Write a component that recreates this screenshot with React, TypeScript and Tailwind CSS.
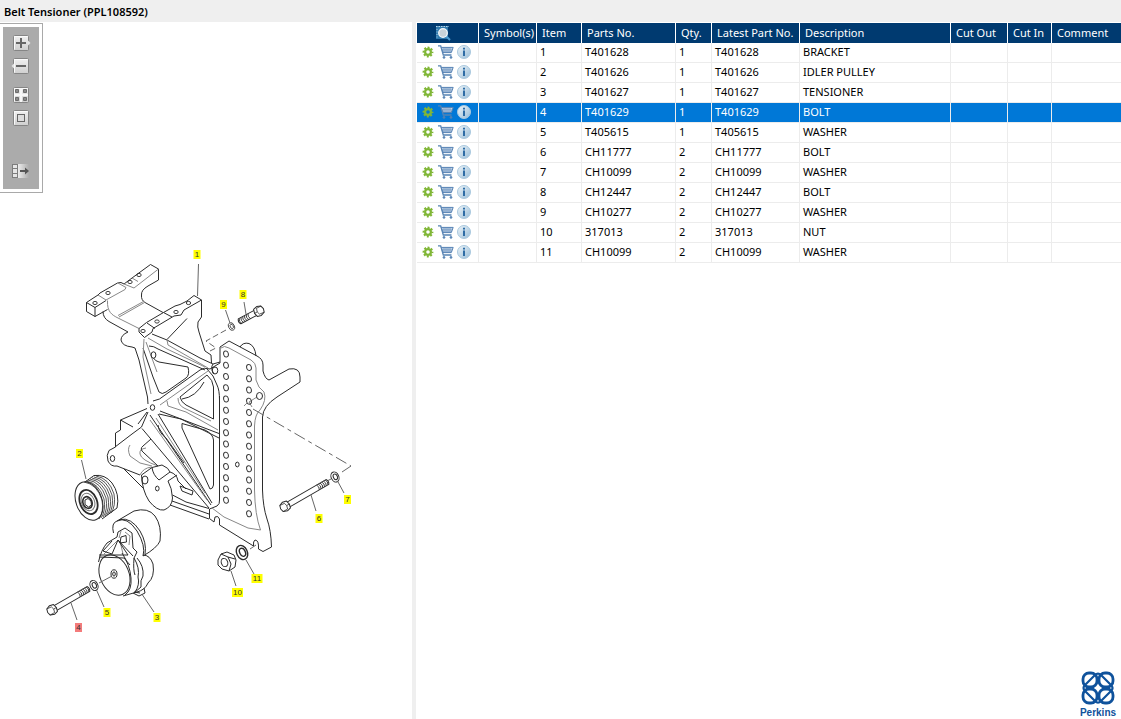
import React, { useState } from 'react'

const parts = [
  { item: 1, partNo: 'T401628', qty: 1, description: 'BRACKET' },
  { item: 2, partNo: 'T401626', qty: 1, description: 'IDLER PULLEY' },
  { item: 3, partNo: 'T401627', qty: 1, description: 'TENSIONER' },
  { item: 4, partNo: 'T401629', qty: 1, description: 'BOLT' },
  { item: 5, partNo: 'T405615', qty: 1, description: 'WASHER' },
  { item: 6, partNo: 'CH11777', qty: 2, description: 'BOLT' },
  { item: 7, partNo: 'CH10099', qty: 2, description: 'WASHER' },
  { item: 8, partNo: 'CH12447', qty: 2, description: 'BOLT' },
  { item: 9, partNo: 'CH10277', qty: 2, description: 'WASHER' },
  { item: 10, partNo: '317013', qty: 2, description: 'NUT' },
  { item: 11, partNo: 'CH10099', qty: 2, description: 'WASHER' }
]

const columns = [
  { label: 'Symbol(s)', width: 'w-[58px]' },
  { label: 'Item', width: 'w-[45px]' },
  { label: 'Parts No.', width: 'w-[94px]' },
  { label: 'Qty.', width: 'w-[36px]' },
  { label: 'Latest Part No.', width: 'w-[88px]' },
  { label: 'Description', width: 'w-[151px]' },
  { label: 'Cut Out', width: 'w-[57px]' },
  { label: 'Cut In', width: 'w-[44px]' },
  { label: 'Comment', width: '' }
]

// Centre of every callout and the leader line that points to its part
const callouts = [
  { item: 1, x: 197, y: 255, line: 'M198.5 264 L197.5 296' },
  { item: 8, x: 243, y: 295, line: 'M244 302 L246 314' },
  { item: 9, x: 223.5, y: 305, line: 'M225.5 310 L230 323' },
  { item: 2, x: 79.5, y: 454, line: 'M81.5 460 L86 479' },
  { item: 7, x: 347.5, y: 500, line: 'M337.5 481 L344 493' },
  { item: 6, x: 319, y: 519, line: 'M311 495 L316 511' },
  { item: 11, x: 257, y: 579, line: 'M246 560 L254 574' },
  { item: 10, x: 237.5, y: 593, line: 'M231 571 L236 586' },
  { item: 5, x: 107, y: 613, line: 'M96.5 590 L104 607' },
  { item: 3, x: 157, y: 618, line: 'M142.5 595 L154 612' },
  { item: 4, x: 78.5, y: 628, line: 'M71 603 L77 620' }
]

const row14 = Array.from({ length: 14 }, (_, i) => i)

function GearIcon() {
  return (
    <svg viewBox="0 0 12 12" className="h-3 w-3" fill="none" stroke="#80b636">
      <circle cx="6" cy="6" r="4.5" strokeWidth="1.8" strokeDasharray="2 1.534" strokeDashoffset="1" />
      <circle cx="6" cy="6" r="2.9" strokeWidth="2.2" />
    </svg>
  )
}

function CartIcon() {
  return (
    <svg viewBox="-1 0 17 14" className="h-[14px] w-[17px]" fill="none" stroke="#5682b3">
      <path d="M0 .8H2.7L5.3 10H13.5" strokeWidth="1.3" />
      <path d="M3.3 2.4H15.2L13.3 7.6H5z" fill="#dbe6f2" />
      <path d="M6 2.5V7.5M8 2.5V7.5M10 2.5V7.5M12 2.5V7.5M4 4.2H14.5M4.5 6H14" strokeWidth=".6" />
      <circle cx="6" cy="12.4" r=".9" fill="#5682b3" />
      <circle cx="13" cy="12.4" r=".9" fill="#5682b3" />
    </svg>
  )
}

function InfoIcon() {
  return (
    <svg viewBox="0 0 14 14" className="h-[14px] w-[14px]">
      <defs>
        <linearGradient id="info" x1="0" y1="0" x2="1" y2="1">
          <stop offset="0" stopColor="#f0f6fa" />
          <stop offset="1" stopColor="#97bcd7" />
        </linearGradient>
      </defs>
      <circle cx="7" cy="7" r="6.5" fill="url(#info)" stroke="#a9c8de" />
      <path d="M6 2.7H8V4.5H6zM6 5.6H8V11H6z" fill="#2e6ca5" />
    </svg>
  )
}

function SearchIcon() {
  return (
    <svg viewBox="0 0 16 16" className="h-4 w-4">
      <path d="M1 1H13V14H1z" fill="#2f79ad" />
      <path d="M1 1.5H14" stroke="#b8d6e8" strokeDasharray="1.5 1" />
      <path d="M2 4V14" stroke="#a8cbe0" strokeDasharray="1 1.5" />
      <path d="M11 11L15 15" stroke="#4b9ad0" strokeWidth="2" />
      <circle cx="8" cy="8" r="4.3" fill="#c8d2d9" stroke="#f3f7fa" strokeWidth="1.3" />
    </svg>
  )
}

function ToolIcon({ name }: { name: string }) {
  const boxed = name !== 'Show list'
  return (
    <svg viewBox="0 0 20 16" className="h-4 w-5">
      <defs>
        <linearGradient id="tool" x1="0" y1="0" x2="0" y2="1">
          <stop offset="0" stopColor="#f1f1f1" />
          <stop offset="1" stopColor="#cfcfcf" />
        </linearGradient>
        <linearGradient id="fade" x1="0" y1="0" x2="1" y2="0">
          <stop offset="0" stopColor="#ececec" />
          <stop offset="1" stopColor="#ababab" />
        </linearGradient>
      </defs>
      {boxed && <rect x="2.5" y=".5" width="15" height="15" rx="1" fill="url(#tool)" stroke="#858585" />}
      {boxed && <path d="M3.5 14.5V1.5H16.5" fill="none" stroke="#fafafa" />}
      {name === 'Zoom in' && (
        <>
          <path d="M17 5.5L19.5 8L17 10.5z" fill="#e4e4e4" />
          <path d="M10 3V13M5 8H15" stroke="#666" strokeWidth="2" />
        </>
      )}
      {name === 'Zoom out' && (
        <>
          <path d="M3 5.5L.5 8L3 10.5z" fill="#e4e4e4" />
          <path d="M5 8H15" stroke="#666" strokeWidth="2" />
        </>
      )}
      {name === 'Fit all' && (
        <>
          <path d="M10 1V15M3 8H17" stroke="#f7f7f7" strokeWidth="2" />
          <path d="M4.5 2.5h3v3h-3zM12.5 2.5h3v3h-3zM4.5 10.5h3v3h-3zM12.5 10.5h3v3h-3z" fill="#8b8b8b" stroke="#6c6c6c" />
        </>
      )}
      {name === 'Actual size' && <rect x="6.5" y="4.5" width="7" height="7" fill="#ddd" stroke="#666" />}
      {name === 'Show list' && (
        <>
          <path d="M7 1H18V15H7z" fill="url(#fade)" />
          <path d="M1.5 1v14M6.5 1v14M1 1.5h5M1 5.5h5M1 10.5h5M1 14.5h5" stroke="#7d7d7d" />
          <path d="M2 2h4v3H2zM2 6h4v4H2zM2 11h4v3H2z" fill="#e6e6e6" />
          <path d="M9 8H16" stroke="#555" strokeWidth="2" />
          <path d="M14 4.5L18 8L14 11.5z" fill="#555" />
        </>
      )}
    </svg>
  )
}

function ToolButton({ name, className = '' }: { name: string; className?: string }) {
  return (
    <button type="button" aria-label={name} className={`flex h-4 w-5 ${className}`}>
      <ToolIcon name={name} />
    </button>
  )
}

function BracketDrawing() {
  return (
    <g>
      {/* rear mounting rail */}
      <path d="M86.5 302.5L98 295L100 293L117.5 283L121 282.5L124 284L132 278L150.5 264.5L158.5 269V280L148 286Q141 290 141.5 295Q141 300 145 302.5L163 312.5" />
      <path d="M86.5 302.5V311.5L95 316.5L107.5 309.5M95 316.5V307.5L86.5 302.5M95 307.5L106 300.5M103 311.5Q103 318 109 321.5L128 332" />
      <g className="stroke-[#888]">
        <path d="M98 295L106 300L125 289.5L126 287.5L118 283M124 284L134 288L158.5 269M132 278L138 281.5" />
        <path d="M107.5 300.5C107 312 112 315 118 318L139 328.5M118 315.5L143.5 301.5M119 317L144.5 302.5" />
      </g>
      {/* front mounting rail */}
      <path d="M139 328.5L146.5 322.5L163.5 312.5L175 306L180 304.5L187 301L194 295.5L201.5 300V317L198 322Q197 327 199 332L205 351L211 355L211.5 363" />
      <path d="M201.5 300L184 310L181 315L174 316L153 328.5L152 332L144.5 337.5M139 328.5V332L144.5 337.5M147 323L155 328.5M163.5 312.5L172 317" />
      <path d="M187 318.5L167 339.5M152 334L167 340L200 358L213 364" />
      <path d="M128 332Q121 335 121 340Q122 346 132 347L135 348L139 360" />
      {/* ribs around the centre hub */}
      <path d="M139 360L147.5 397L148 404M143 348L153 377L159 392Q162 395 166 392L186 378Q190 375 188 367L159 362Q155 361 153.5 358" />
      <path d="M149 346Q154 346 158 349L205 370M159.5 399L200 370Q204 367 210 369L220 363M153 401L159.5 399" />
      <path d="M142 428.5L209 508M150 415L211 505M158 414L212 503M160 411L219 433.5M159 414L181 419L219 438M148 412L141.5 427" />
      <path d="M207 375Q213 380 213.5 387V419L186 405Q181 402 180 397L207 375M207 369Q214 375 217 385Q219.5 390 219.5 400" />
      <path d="M182 423.5L205 430Q213 434 213.5 440V485Q213 489 210 489L182 428z" />
      <path d="M182 399Q196 397 204 382M158 425Q159 433 166 438L184 463" />
      <g className="stroke-[#888]">
        <path d="M144 339L143 357L151 394M146 342L157 372M148 338L167 349L205 367M167 340L168 345L208 368M160 405L208 371" />
        <path d="M167 401L168 406L186 412L218 430M178 398Q178 405 184 408L211 421M150 420L207 500M156 418L205 493" />
      </g>
      {/* left lug and block */}
      <path d="M147 408.5L120.5 420V430L115.5 433V447L109 450.5Q106 455 108 461Q111 467 117 466L140 475M115 447L132 434L141.5 427M120.5 420L133 427M138 424L147 412" />
      <path d="M140 475Q143 468 151.5 467M130 445Q127 449 130 456L140 463L152 466M146 448Q139 449 140 454Q141 460 158 466" className="stroke-[#888]" />
      <path d="M158 466L144 453Q139 449 143 446L151 439" />
      <path d="M123 468L143 488M141.5 475L152 467.5L162 465Q169 468 170 472L159 480Q153 475 152 467.5M170 472Q177 474 178 481L186 489" />
      <path d="M141.5 475Q142 490 149 501Q157 511 164 510Q172 507 172.5 498Q172 488 168 481L177 475" />
      <path d="M172.5 495L186 502L209 508.5M172 501L209 514M170 505L209 519M180 486L193 491L192 495L182 491z" />
      {/* drilled plate */}
      <path d="M220 363V347L229 341L257 356Q263 359 263 365V371Q265 379 269 380L289 369Q300 367 300 377V382L277 397Q263 406 262.5 417V490Q263 507 267 519Q271 530 271.5 547L263 551.5L258.5 549Q259 540 255 540Q253 541 253.5 546L219.5 525V519Q218 515 215 517L214 522L209.5 518.5V509L217 506Q220 504 219.5 500V396" />
      <path d="M240 347Q243 342 249 343.5Q255 346 256 356M220 362L213 364Q210 368 214 374" />
      <g className="stroke-[#888]">
        <path d="M221 348Q224 345 229 348L251 360Q256 363 256 368V380Q258 388 264 392Q267 400 260 410Q255 414 254.5 426V490Q255 515 260.5 530L248 528L224 517L212 508" />
        <path d="M257 397L249 402L252 407M244 406L247 403" />
      </g>
      {row14.map(i => (
        <g key={i} stroke="#444">
          <ellipse cx="226" cy={354 + i * 11.25} rx="2.4" ry="3" transform={`rotate(-15 226 ${354 + i * 11.25})`} />
          <ellipse cx="249" cy={367.5 + i * 11.25} rx="2.4" ry="3" transform={`rotate(-15 249 ${367.5 + i * 11.25})`} />
        </g>
      ))}
      <ellipse cx="237.3" cy="464.5" rx="1.8" ry="2.4" />
      <ellipse cx="215" cy="370.5" rx="2.8" ry="3.5" />
      <ellipse cx="259.5" cy="396" rx="3" ry="3.5" />
      <ellipse cx="152.5" cy="407.5" rx="2.2" ry="2.8" />
      <ellipse cx="112.5" cy="458.5" rx="2.2" ry="3" />
      <ellipse cx="145" cy="480" rx="3" ry="4" />
      <ellipse cx="157.3" cy="488.5" rx="1.8" ry="2.4" />
      <ellipse cx="153.5" cy="355" rx="2.4" ry="3.2" />
      <g strokeWidth=".9">
        {[[95, 303], [108, 293], [130, 282], [139, 275], [143, 331], [157, 321.5], [176, 312], [188.5, 303]].map(([x, y]) => (
          <ellipse key={x} cx={x} cy={y} rx="2.2" ry="1.6" />
        ))}
      </g>
    </g>
  )
}

function PulleyDrawing() {
  return (
    <g>
      <ellipse cx="89" cy="501" rx="13" ry="20" transform="rotate(-20 89 501)" fill="#fff" />
      <path d="M85 482L94 475.5Q105 474 112 483Q120 494 117 508L102 519" />
      <g strokeWidth=".8">
        {[0, 2, 4, 6, 8, 10, 12].map(i => (
          <path key={i} d={`M${84 + i} ${482 - i / 2}Q${97 + i} ${484 - i / 2} ${102 + i} ${500 - i / 2}Q${104 + i} ${512 - i / 2} ${99 + i} ${519 - i / 2}`} />
        ))}
      </g>
      <ellipse cx="88.5" cy="502" rx="8.5" ry="12.5" transform="rotate(-22 88.5 502)" strokeWidth="1.8" />
      <ellipse cx="88" cy="502" rx="6.5" ry="9" transform="rotate(-22 88 502)" className="stroke-[#777]" />
      <ellipse cx="87.5" cy="502.5" rx="4.5" ry="6" transform="rotate(-22 87.5 502.5)" strokeWidth="1.6" />
      <path d="M85 500L88 498.5L91 501L91.5 505L88.5 507L85 504.5z" />
    </g>
  )
}

function TensionerDrawing() {
  return (
    <g>
      <path d="M113.5 533Q111 523 117 521L134 511Q148 507 155 516Q162 526 160 541Q157 548 143 556" />
      <path d="M117 521Q127 516 137 531Q146 546 143 556M120 519.5Q131 517 140 531Q147 543 145 554" />
      <ellipse cx="114.5" cy="575" rx="14.5" ry="21" transform="rotate(-22 114.5 575)" fill="#fff" />
      <path d="M98.5 562Q101 550 107 543L117 537L118 532L125 528L132 533L133 548L137 552L134 558Q133 570 135 575" />
      <path d="M121 531L119 538M125 532L130 536L129 545M104 554L118 540M120 541L123 554" className="stroke-[#888]" />
      <path d="M99 555H128L118 540L112 554L103 551L112 541M118 540L133 556M99 557L124 558L130 565" />
      <path d="M121 537L126 535.5L126.5 542L120 543z" />
      <path d="M143 555Q150 555 153 564Q155 577 148 583Q145 590 137 592L123 596M137 558Q144 566 143 576Q140 580 141 587L134 593M134 558Q140 568 138 577Q140 585 135 592" />
      <path d="M133 593L139 596L145 593L144 588M134 592L140 593" />
      <path d="M122 553Q130 565 131 578Q132 590 125 595" />
      <ellipse cx="114" cy="574" rx="3" ry="4.2" />
      <ellipse cx="114" cy="574" rx="1.3" ry="2.1" />
    </g>
  )
}

function Washer({ x, y, size = 1 }: { x: number; y: number; size?: number }) {
  return (
    <g transform={`translate(${x} ${y}) rotate(-25) scale(${size})`}>
      <ellipse rx="3.8" ry="5.3" fill="#fff" />
      <ellipse cx=".4" rx="2" ry="3" />
    </g>
  )
}

function Bolt({ x, y, length, thread, angle }: { x: number; y: number; length: number; thread: number; angle: number }) {
  const marks = Array.from({ length: Math.floor(thread / 2) }, (_, i) => length - 1 - i * 2)
  return (
    <g transform={`translate(${x} ${y}) rotate(${angle})`}>
      <path d={`M4 -2.8H${length}Q${length + 2} 0 ${length} 2.8H4`} fill="#fff" />
      {marks.map(m => <path key={m} d={`M${m} -2.8Q${m + 2} 0 ${m} 2.8`} strokeWidth=".8" />)}
      <path d="M-4 -3.5L0 -5L4 -4L5 0L4 4L0 5L-4 3.5L-5 0z" fill="#fff" />
      <path d="M-4 -3.5L1 -3L2 0L1 3.5L-4 3.5M2 0H5" strokeWidth=".7" />
    </g>
  )
}

function Diagram({ selected, onSelect }: { selected: number; onSelect: (item: number) => void }) {
  return (
    <svg viewBox="0 22 412 697" className="block w-full" role="img" aria-label="Belt tensioner exploded view">
      <g fill="none" stroke="#2b2b2b" strokeWidth="1" strokeLinejoin="round">
        <BracketDrawing />
        <PulleyDrawing />
        <TensionerDrawing />
        <g stroke="#666" strokeDasharray="12 4 4 4">
          <path d="M253 409L351 466" />
          <path d="M226 330L206 341L216 348L210 351" strokeDasharray="6 3" />
          <path d="M351 466L342 472M99 583L112 576M250 549L256 545M331 479L327 481" strokeDasharray="none" />
        </g>
        <Bolt x={259} y={311} length={22} thread={13} angle={152} />
        <Bolt x={285} y={506.5} length={49} thread={12} angle={-30} />
        <Bolt x={52} y={610} length={42} thread={13} angle={-30} />
        <Washer x={231.5} y={326.5} size={0.75} />
        <Washer x={335} y={477} />
        <Washer x={94} y={585.5} />
        <Washer x={242} y={552.5} size={1.4} />
        <path d="M218 560L221 554L227 552L234 555L236 560L235 567L229 571L222 569L218 565z" fill="#fff" />
        <path d="M221 554L228 557L235 559M228 557L231 564L229 571" />
        <ellipse cx="224.5" cy="562.5" rx="3.2" ry="4.2" transform="rotate(-20 224.5 562.5)" />
        {callouts.map(c => <path key={c.item} d={c.line} stroke="#666" />)}
      </g>
      {callouts.map(c => {
        const w = c.item > 9 ? 11 : 7
        return (
          <g key={c.item} onClick={() => onSelect(c.item)} className="cursor-pointer">
            <rect x={c.x - w / 2} y={c.y - 5} width={w} height="9" fill={c.item === selected ? '#f47b7b' : '#ffff00'} />
            <text x={c.x} y={c.y + 2} textAnchor="middle" fill="#333" className="font-['Liberation_Sans',sans-serif] text-[8px]">
              {c.item}
            </text>
          </g>
        )
      })}
    </svg>
  )
}

function PerkinsLogo() {
  return (
    <div className="flex w-10 flex-col items-center text-[#0f529c]">
      <svg viewBox="0 0 34 36" className="h-9 w-[34px]" fill="none" stroke="currentColor" strokeWidth="2.8">
        <rect x="2" y="2" width="14" height="14" rx="6" />
        <rect x="18" y="2" width="14" height="14" rx="6" />
        <rect x="2" y="18" width="14" height="14" rx="6" />
        <rect x="18" y="18" width="14" height="14" rx="6" />
        <path d="M4 14L14 4Q17 1 20 4L30 14M4 20L14 30Q17 33 20 30L30 20M4 14Q1 17 4 20M30 14Q33 17 30 20" strokeWidth="2.2" />
      </svg>
      <span className="font-['Liberation_Sans',sans-serif] text-[10px] leading-3 font-bold">Perkins</span>
    </div>
  )
}

export default function App() {
  const [selected, setSelected] = useState(4)

  return (
    <div className="flex min-h-screen flex-col bg-[#efefef] font-['Noto_Sans','Open_Sans',sans-serif] text-[11px] text-black">
      <header className="h-[22px] px-1">
        <h1 className="text-[11px] leading-6 font-semibold">Belt Tensioner (PPL108592)</h1>
      </header>

      <main className="flex flex-1 gap-1">
        <section className="relative w-[412px] shrink-0 bg-white">
          <div className="absolute top-px left-0 border border-l-0 border-[#a9a9a9] bg-white p-[3px]">
            <div className="flex h-[162px] w-9 flex-col items-center bg-[#ababab] pt-2">
              <ToolButton name="Zoom in" />
              <ToolButton name="Zoom out" className="mt-[7px]" />
              <ToolButton name="Fit all" className="mt-[13px]" />
              <ToolButton name="Actual size" className="mt-[7px]" />
              <ToolButton name="Show list" className="mt-[37px]" />
            </div>
          </div>
          <Diagram selected={selected} onSelect={setSelected} />
        </section>

        <section className="flex min-w-0 flex-1 flex-col justify-between bg-white pt-px pl-px">
          <table className="w-full table-fixed border-separate border-spacing-0">
            <thead>
              <tr className="h-5 bg-[#003a70] text-white">
                <th className="w-[62px] border-r border-white p-0">
                  <span className="flex items-center justify-center pr-[10px]">
                    <SearchIcon />
                  </span>
                </th>
                {columns.map(col => (
                  <th key={col.label} className={`${col.width} border-r border-white p-0 pl-[5px] text-left leading-5 font-normal whitespace-nowrap last:border-r-0`}>
                    {col.label}
                  </th>
                ))}
              </tr>
            </thead>
            <tbody>
              {parts.map(part => {
                const active = part.item === selected
                const cell = 'border-r border-b border-[#ececec] p-0 pb-px pl-[3px] leading-[18px] last:border-r-0'
                return (
                  <tr key={part.item} onClick={() => setSelected(part.item)} className={active ? 'h-5 bg-[#0078d7] text-white' : 'h-5'}>
                    <td className={cell}>
                      <div className="flex h-[18px] items-center gap-[3px] pl-[2px]">
                        <button type="button" aria-label="Options"><GearIcon /></button>
                        <button type="button" aria-label="Add to cart"><CartIcon /></button>
                        <button type="button" aria-label="Information"><InfoIcon /></button>
                      </div>
                    </td>
                    <td className={cell} />
                    <td className={cell}>{part.item}</td>
                    <td className={cell}>{part.partNo}</td>
                    <td className={cell}>{part.qty}</td>
                    <td className={cell}>{part.partNo}</td>
                    <td className={cell}>{part.description}</td>
                    <td className={cell} />
                    <td className={cell} />
                    <td className={cell} />
                  </tr>
                )
              })}
            </tbody>
          </table>

          <footer className="flex justify-end px-[3px]">
            <PerkinsLogo />
          </footer>
        </section>
      </main>
    </div>
  )
}
